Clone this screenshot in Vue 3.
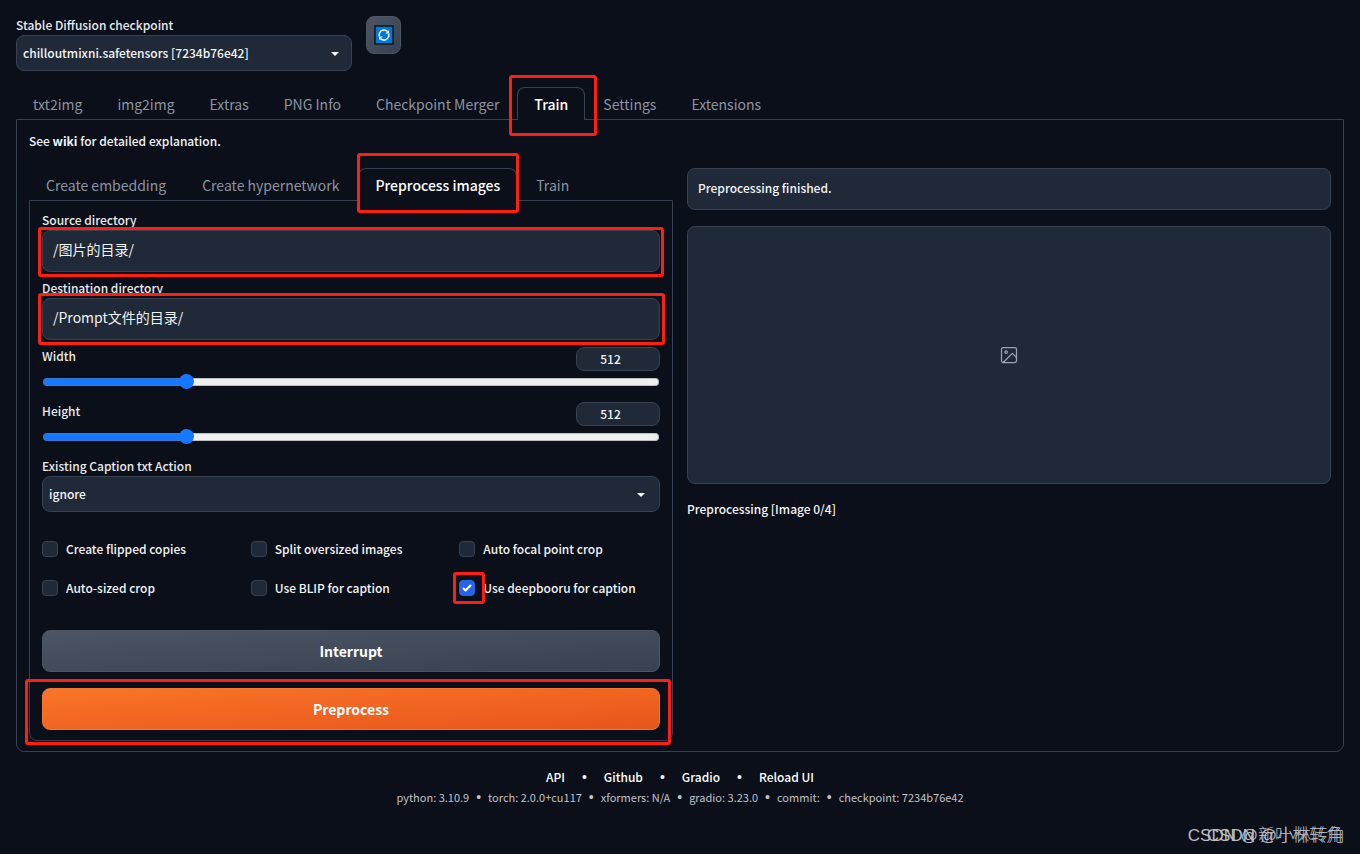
<script setup>
import { ref } from 'vue'

const mainTabs = ['txt2img', 'img2img', 'Extras', 'PNG Info', 'Checkpoint Merger', 'Train', 'Settings', 'Extensions']
const activeMain = ref('Train')
const subTabs = ['Create embedding', 'Create hypernetwork', 'Preprocess images', 'Train']
const activeSub = ref('Preprocess images')

const source = ref('/图片的目录/')
const destination = ref('/Prompt文件的目录/')
const sliders = ref([
  { id: 'width', label: 'Width', value: 512 },
  { id: 'height', label: 'Height', value: 512 },
])
const min = 64
const max = 2048
const fill = (v) => ((v - min) / (max - min)) * 100 + '%'

const options = ref([
  { label: 'Create flipped copies', on: false },
  { label: 'Split oversized images', on: false },
  { label: 'Auto focal point crop', on: false },
  { label: 'Auto-sized crop', on: false },
  { label: 'Use BLIP for caption', on: false },
  { label: 'Use deepbooru for caption', on: true, marked: true },
])
const links = ['API', 'Github', 'Gradio', 'Reload UI']
const versions = ['python: 3.10.9', 'torch: 2.0.0+cu117', 'xformers: N/A', 'gradio: 3.23.0', 'commit: ', 'checkpoint: 7234b76e42']
</script>

<template>
  <div class="page">
    <header class="quick">
      <div class="checkpoint">
        <label class="label" for="ckpt">Stable Diffusion checkpoint</label>
        <div class="select">
          <select id="ckpt"><option>chilloutmixni.safetensors [7234b76e42]</option></select>
          <svg class="caret" viewBox="0 0 18 18"><path d="M5 8l4 4 4-4z" /></svg>
        </div>
      </div>
      <button class="refresh" type="button" aria-label="Refresh">
        <svg viewBox="0 0 20 20">
          <rect x="1" y="1" width="18" height="18" fill="#0078d7" stroke="#101010" stroke-width="1.4" />
          <g fill="none" stroke="#fff" stroke-width="1.5">
            <path d="M5.2 11.2A4.9 4.9 0 0 1 5.9 7.3M7.6 5.7A4.9 4.9 0 0 1 13.4 6.4" />
            <path d="M14.8 8.8A4.9 4.9 0 0 1 14.1 12.7M12.4 14.3A4.9 4.9 0 0 1 6.6 13.6" />
            <path d="M5.9 7.3A4.9 4.9 0 0 1 7.6 5.7M14.1 12.7A4.9 4.9 0 0 1 12.4 14.3" />
          </g>
          <path fill="#fff" d="M15 5v3.6h-3.6zM5 15v-3.6h3.6z" />
        </svg>
      </button>
    </header>

    <nav class="tabs main-tabs">
      <div v-for="t in mainTabs" :key="t" class="tab-wrap">
        <button type="button" class="tab" :class="{ active: t === activeMain }" @click="activeMain = t">{{ t }}</button>
        <span v-if="t === 'Train'" class="mark mark-train"></span>
      </div>
    </nav>

    <main class="panel">
      <p class="help">See <a href="#wiki">wiki</a> for detailed explanation.</p>
      <div class="columns">
        <section class="left">
          <nav class="tabs sub-tabs">
            <div v-for="t in subTabs" :key="t" class="tab-wrap">
              <button type="button" class="tab" :class="{ active: t === activeSub }" @click="activeSub = t">{{ t }}</button>
              <span v-if="t === 'Preprocess images'" class="mark mark-sub"></span>
            </div>
          </nav>
          <div class="form">
            <div class="field">
              <label class="label" for="src">Source directory</label>
              <div class="marked">
                <input id="src" v-model="source" class="text" type="text" />
                <span class="mark mark-source"></span>
              </div>
            </div>
            <div class="field second">
              <label class="label" for="dst">Destination directory</label>
              <div class="marked">
                <input id="dst" v-model="destination" class="text" type="text" />
                <span class="mark mark-destination"></span>
              </div>
            </div>
            <div v-for="s in sliders" :key="s.id" class="slider">
              <div class="slider-head">
                <label class="label" :for="s.id">{{ s.label }}</label>
                <input v-model.number="s.value" class="number" type="text" :aria-label="s.label + ' value'" />
              </div>
              <input :id="s.id" v-model.number="s.value" class="range" type="range" :min="min" :max="max" :style="{ '--fill': fill(s.value) }" />
            </div>
            <div class="caption">
              <label class="label" for="cap">Existing Caption txt Action</label>
              <div class="select">
                <select id="cap"><option>ignore</option></select>
                <svg class="caret" viewBox="0 0 18 18"><path d="M5 8l4 4 4-4z" /></svg>
              </div>
            </div>
            <div class="checks">
              <div v-for="o in options" :key="o.label" class="check">
                <label><input v-model="o.on" type="checkbox" /><span>{{ o.label }}</span></label>
                <svg v-if="o.on" class="tick" viewBox="0 0 16 16"><path d="M12.207 4.793a1 1 0 0 1 0 1.414l-5 5a1 1 0 0 1-1.414 0l-2-2a1 1 0 0 1 1.414-1.414L6.5 9.086l4.293-4.293a1 1 0 0 1 1.414 0z" /></svg>
                <span v-if="o.marked" class="mark mark-check"></span>
              </div>
            </div>
            <button type="button" class="big gray">Interrupt</button>
            <div class="marked run">
              <button type="button" class="big orange">Preprocess</button>
              <span class="mark mark-run"></span>
            </div>
          </div>
        </section>

        <section class="right">
          <div class="status">Preprocessing finished.</div>
          <div class="gallery">
            <svg viewBox="0 0 24 24" fill="none" stroke="currentColor" stroke-width="1.5" stroke-linecap="round" stroke-linejoin="round">
              <rect x="3" y="3" width="18" height="18" rx="2" />
              <circle cx="8.5" cy="8.5" r="1.5" />
              <path d="M21 15l-5-5L5 21" />
            </svg>
          </div>
          <p class="progress">Preprocessing [Image 0/4]</p>
        </section>
      </div>
    </main>

    <footer>
      <div class="links">
        <template v-for="(l, i) in links" :key="l"><i v-if="i">•</i><a href="#">{{ l }}</a></template>
      </div>
      <div class="versions">
        <template v-for="(v, i) in versions" :key="v"><i v-if="i">•</i><span>{{ v }}</span></template>
      </div>
    </footer>
    <div class="watermark back">CSDN @新叶株转角</div>
    <div class="watermark">CSDN @小林转角</div>
  </div>
</template>

<style>
body {
  background: #0b0f19;
}
</style>

<style scoped>
.page {
  box-sizing: border-box;
  position: relative;
  min-height: 100vh;
  padding: 16px;
  background: #0b0f19;
  color: #f3f4f6;
  font: 500 12px/20px "Noto Sans CJK SC", sans-serif;
}
.page *,
.page *::before {
  box-sizing: border-box;
}
button,
input,
select {
  margin: 0;
  font: inherit;
  color: inherit;
}
p {
  margin: 0;
}
.quick {
  display: flex;
  gap: 14px;
  align-items: flex-start;
}
.checkpoint {
  width: 336px;
}
.label {
  display: block;
  height: 19px;
  line-height: 17px;
  color: #e8eaed;
}
.select {
  position: relative;
}
.select select {
  display: block;
  width: 100%;
  height: 36px;
  padding: 0 30px 0 6px;
  appearance: none;
  background: #1f2937;
  border: 1px solid #374151;
  border-radius: 8px;
}
.caret {
  position: absolute;
  right: 8px;
  top: 9px;
  width: 18px;
  height: 18px;
  fill: #fff;
  pointer-events: none;
}
.refresh {
  display: flex;
  align-items: center;
  justify-content: center;
  width: 35px;
  height: 38px;
  padding: 0;
  border: 1px solid #4b5563;
  border-radius: 8px;
  background: linear-gradient(to bottom right, #4b5563, #374151);
}
.refresh svg {
  width: 20px;
  height: 20px;
}
.tabs {
  display: flex;
}
.main-tabs {
  gap: 1px;
  margin-top: 16px;
}
.sub-tabs {
  gap: 2px;
}
.tab-wrap {
  position: relative;
  margin-bottom: -1px;
}
.tab {
  display: block;
  height: 33px;
  padding: 0 16px;
  border: 1px solid transparent;
  border-bottom: 0;
  border-radius: 8px 8px 0 0;
  background: transparent;
  color: #8a94a2;
  font-size: 14px;
  font-weight: 400;
  white-space: nowrap;
}
.tab.active {
  border-color: #374151;
  background: #0b0f19;
  color: #fff;
  font-weight: 500;
}
.mark {
  position: absolute;
  z-index: 2;
  border: 3px solid #ff1f12;
  border-radius: 3px;
  pointer-events: none;
}
.mark-train {
  inset: -12px -12px -16px -8px;
}
.mark-sub {
  inset: -15px -2px -12px -1px;
}
.mark-source {
  inset: -3px -4px -5px;
}
.mark-destination {
  inset: -5px -5px -5px -4px;
}
.mark-check {
  left: -6px;
  top: -6px;
  width: 32px;
  height: 32px;
}
.mark-run {
  inset: -9px -11px -15px -17px;
}
.panel {
  padding: 12px 12px 10px;
  border: 1px solid #374151;
  border-radius: 0 0 8px 8px;
}
.help {
  margin-bottom: 18px;
  line-height: 18px;
}
.help a {
  color: inherit;
  font-weight: 700;
  text-decoration: none;
}
.columns {
  display: grid;
  grid-template-columns: 1fr 1fr;
  gap: 14px;
}
.left,
.right {
  min-width: 0;
}
.form {
  padding: 10px 12px;
  border: 1px solid #374151;
  border-radius: 0 0 8px 8px;
}
.second {
  margin: 7px 0 0;
}
.marked {
  position: relative;
}
.text {
  display: block;
  width: 100%;
  height: 42px;
  padding: 0 10px 4px;
  border: 1px solid #374151;
  border-radius: 8px;
  background: #1f2937;
  font-size: 14px;
  font-weight: 400;
}
.slider {
  height: 55px;
  padding-top: 7px;
}
.slider-head {
  display: flex;
  justify-content: space-between;
}
.number {
  width: 84px;
  height: 24px;
  padding: 0 15px 2px 0;
  border: 1px solid #374151;
  border-radius: 8px;
  background: #1f2937;
  text-align: center;
}
.range {
  display: block;
  width: calc(100% - 2px);
  height: 16px;
  margin: 3px 1px 0;
  appearance: none;
  background: transparent;
}
.range::-webkit-slider-runnable-track {
  height: 8px;
  border-radius: 4px;
  background: linear-gradient(#1677ff, #1677ff) 0 0 / var(--fill) 100% no-repeat, #efefef;
  box-shadow: inset 0 0 0 1px rgba(120, 120, 120, 0.4);
}
.range::-webkit-slider-thumb {
  appearance: none;
  width: 15px;
  height: 15px;
  margin-top: -4px;
  border-radius: 50%;
  background: #1677ff;
}
.caption {
  margin-top: 7px;
}
.caption .caret {
  right: 10px;
}
.checks {
  display: grid;
  grid-template-columns: repeat(3, 1fr);
  gap: 19px 8px;
  margin: 27px 0 32px;
}
.check {
  position: relative;
}
.check label {
  display: flex;
  align-items: center;
  gap: 8px;
  white-space: nowrap;
}
.check input {
  width: 16px;
  height: 16px;
  appearance: none;
  border: 1px solid #374151;
  border-radius: 4px;
  background: #1f2937;
}
.check input:checked {
  border-color: #2563eb;
  background: #2563eb;
}
.tick {
  position: absolute;
  left: 0;
  top: 2px;
  width: 16px;
  height: 16px;
  fill: #fff;
  pointer-events: none;
}
.big {
  display: block;
  width: 100%;
  height: 42px;
  border-radius: 8px;
  color: #fff;
  font-size: 14px;
  font-weight: 700;
}
.gray {
  border: 1px solid #4b5563;
  background: linear-gradient(to bottom right, #4b5563, #374151);
}
.orange {
  border: 1px solid #f6752c;
  background: linear-gradient(to bottom right, #f97528, #e8551b);
}
.run {
  margin-top: 16px;
}
.status {
  height: 42px;
  padding: 9px 10px;
  border: 1px solid #374151;
  border-radius: 8px;
  background: #1f2937;
}
.gallery {
  display: flex;
  align-items: center;
  justify-content: center;
  height: 258px;
  margin: 16px 0 15px;
  border: 1px solid #374151;
  border-radius: 8px;
  background: #1f2937;
  color: #9ca3af;
}
.gallery svg {
  width: 20px;
  height: 20px;
}
footer {
  margin-top: 15px;
}
footer i {
  font: 400 14px/20px "Liberation Sans", sans-serif;
}
.links,
.versions {
  display: flex;
  justify-content: center;
}
.links {
  gap: 17px;
}
.links a {
  color: #fff;
  text-decoration: none;
}
.versions {
  gap: 7px;
  color: #c0c2c6;
  font-size: 11px;
  font-weight: 400;
}
.watermark {
  position: absolute;
  right: 15px;
  bottom: 6px;
  color: #b9bcc2;
  font: 300 17px/24px "Liberation Sans", "Noto Sans CJK SC", sans-serif;
  white-space: nowrap;
}
.back {
  right: 17px;
}
</style>
